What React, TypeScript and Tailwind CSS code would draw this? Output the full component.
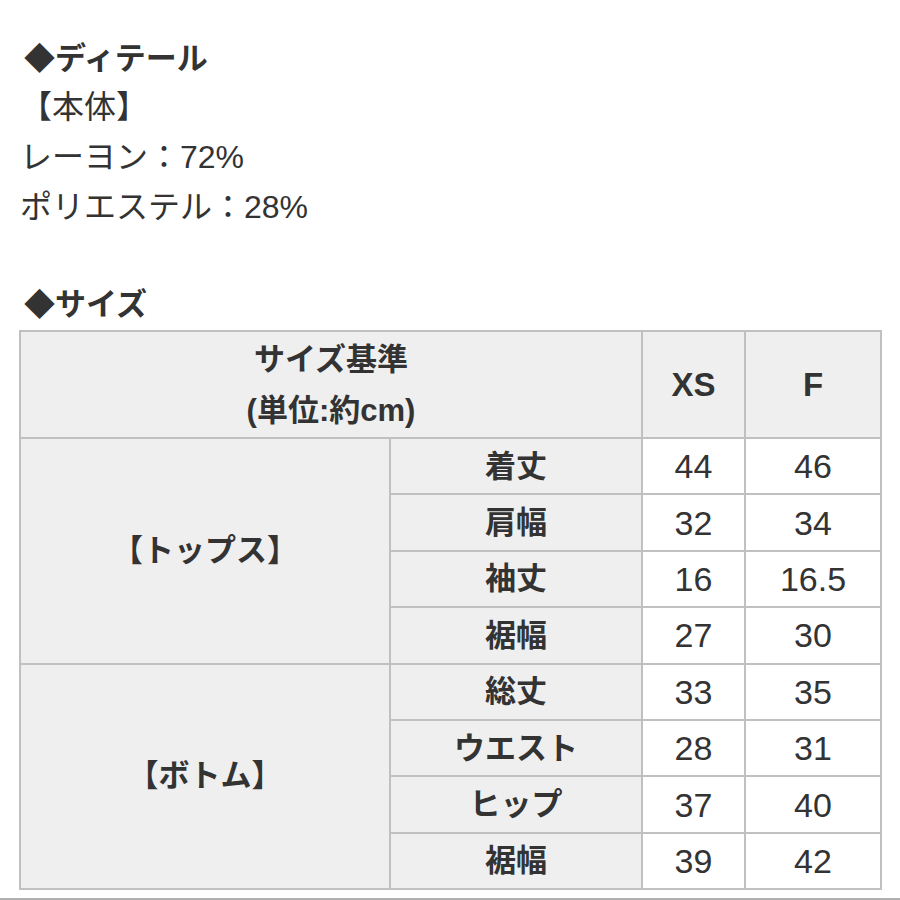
import React from "react";

const cjk = "font-['Noto_Sans_CJK_JP',sans-serif]";

const tops = [
  ["着丈", "44", "46"],
  ["肩幅", "32", "34"],
  ["袖丈", "16", "16.5"],
  ["裾幅", "27", "30"],
];
const bottoms = [
  ["総丈", "33", "35"],
  ["ウエスト", "28", "31"],
  ["ヒップ", "37", "40"],
  ["裾幅", "39", "42"],
];

const bd = "border-2 border-[#c0c0c0]";

function Group({ title, rows }: { title: string; rows: string[][] }) {
  return (
    <>
      {rows.map((r, i) => (
        <tr key={i} className="h-[56.4px]">
          {i === 0 && (
            <td rowSpan={rows.length} className={`${bd} bg-[#efefef] text-center font-bold text-[31px]`}>
              {title}
            </td>
          )}
          <td className={`${bd} bg-[#efefef] text-center font-bold text-[31px] leading-none`}>{r[0]}</td>
          <td className={`${bd} bg-white text-center text-[34px] leading-none`}>{r[1]}</td>
          <td className={`${bd} bg-white text-center text-[34px] leading-none`}>{r[2]}</td>
        </tr>
      ))}
    </>
  );
}

export default function App() {
  return (
    <div className="w-[900px] h-[900px] bg-white text-[#333] font-['Liberation_Sans','Noto_Sans_CJK_JP',sans-serif] overflow-hidden">
      <div className="px-[20px] text-[32px] leading-[50px]">
        <div className="mt-[31px] h-[50px] font-bold pl-[4px] text-[31px]">
          <span className={cjk}>◆</span>ディテール
        </div>
        <div className="mt-[1px] h-[50px]">【本体】</div>
        <div className="h-[50px]">レーヨン：72%</div>
        <div className="h-[50px]">ポリエステル：28%</div>
        <div className="mt-[45px] h-[50px] font-bold pl-[4px] text-[31px]">
          <span className={cjk}>◆</span>サイズ
        </div>
      </div>
      <div className="pl-[19px] mt-[3px]">
        <table className="border-collapse table-fixed w-[861px]">
          <colgroup>
            <col className="w-[370px]" />
            <col className="w-[252px]" />
            <col className="w-[103px]" />
            <col className="w-[136px]" />
          </colgroup>
          <tbody>
            <tr className="h-[107px]">
              <td colSpan={2} className={`${bd} bg-[#efefef] text-center font-bold text-[31px] leading-[51px]`}>
                <div>サイズ基準</div>
                <div>(単位:約cm)</div>
              </td>
              <td className={`${bd} bg-[#efefef] text-center font-bold text-[33px]`}>XS</td>
              <td className={`${bd} bg-[#efefef] text-center font-bold text-[33px]`}>F</td>
            </tr>
            <Group title="【トップス】" rows={tops} />
            <Group title="【ボトム】" rows={bottoms} />
          </tbody>
        </table>
      </div>
      <div className="mt-[8px] border-t-2 border-[#b0b0b0]" />
    </div>
  );
}
